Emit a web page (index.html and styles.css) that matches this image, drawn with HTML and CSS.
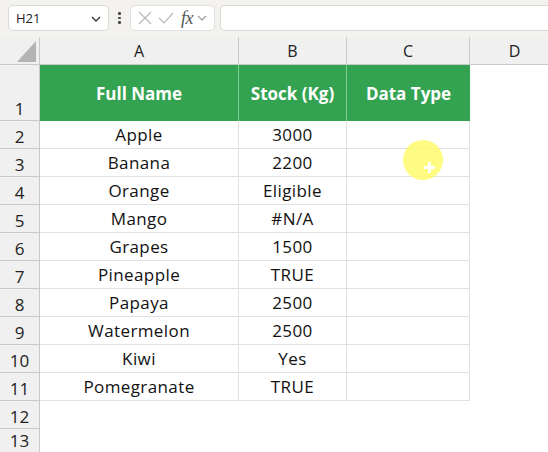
FILE: index.html
```html
<!DOCTYPE html>
<html>
<head>
<meta charset="utf-8">
<link rel="stylesheet" href="styles.css">
</head>
<body>
<div class="app">
  <div class="fbar">
    <div class="namebox">
      <span class="ref">H21</span>
      <svg class="chev" width="12" height="8" viewBox="0 0 12 8"><path d="M2 2 L6 6 L10 2" fill="none" stroke="#333" stroke-width="1.3"/></svg>
    </div>
    <div class="dots"><i></i><i></i><i></i></div>
    <div class="btns">
      <svg width="16" height="16" viewBox="0 0 16 16"><path d="M2 2 L14 14 M14 2 L2 14" stroke="#b8b8b8" stroke-width="1.2" fill="none"/></svg>
      <svg width="18" height="16" viewBox="0 0 18 16"><path d="M2 8 L7 13 L16 3" stroke="#b8b8b8" stroke-width="1.2" fill="none"/></svg>
      <span class="fx">fx</span>
      <svg width="10" height="8" viewBox="0 0 10 8"><path d="M1 2 L5 6 L9 2" fill="none" stroke="#999" stroke-width="1.1"/></svg>
    </div>
    <div class="finput"></div>
  </div>
  <div class="sheet">
    <div class="corner"><div class="tri"></div></div>
    <div class="ch">A</div><div class="ch">B</div><div class="ch">C</div><div class="ch">D</div>

    <div class="rh">1</div><div class="hd">Full Name</div><div class="hd">Stock (Kg)</div><div class="hd">Data Type</div><div class="e"></div>

    <div class="rh">2</div><div class="c">Apple</div><div class="c">3000</div><div class="c"></div><div class="e"></div>
    <div class="rh">3</div><div class="c">Banana</div><div class="c">2200</div><div class="c"></div><div class="e"></div>
    <div class="rh">4</div><div class="c">Orange</div><div class="c">Eligible</div><div class="c"></div><div class="e"></div>
    <div class="rh">5</div><div class="c">Mango</div><div class="c">#N/A</div><div class="c"></div><div class="e"></div>
    <div class="rh">6</div><div class="c">Grapes</div><div class="c">1500</div><div class="c"></div><div class="e"></div>
    <div class="rh">7</div><div class="c">Pineapple</div><div class="c">TRUE</div><div class="c"></div><div class="e"></div>
    <div class="rh">8</div><div class="c">Papaya</div><div class="c">2500</div><div class="c"></div><div class="e"></div>
    <div class="rh">9</div><div class="c">Watermelon</div><div class="c">2500</div><div class="c"></div><div class="e"></div>
    <div class="rh">10</div><div class="c">Kiwi</div><div class="c">Yes</div><div class="c"></div><div class="e"></div>
    <div class="rh">11</div><div class="c">Pomegranate</div><div class="c">TRUE</div><div class="c"></div><div class="e"></div>
    <div class="rh">12</div><div class="e"></div><div class="e"></div><div class="e"></div><div class="e"></div>
    <div class="rh last">13</div><div class="e"></div><div class="e"></div><div class="e"></div><div class="e"></div>
  </div>
  <div class="cursor"><span class="plus"></span></div>
</div>
</body>
</html>
```
FILE: styles.css
```css
* { box-sizing: border-box; }
html, body { margin: 0; padding: 0; background: #fff; }
body { width: 548px; height: 452px; overflow: hidden; font-family: "Open Sans", "Noto Sans", sans-serif; }
.app { position: relative; width: 548px; height: 452px; overflow: hidden; }

.fbar {
  height: 37px;
  background: #f4f2ef;
  display: flex;
  align-items: flex-start;
  padding: 5px 0 0 8px;
}
.namebox {
  width: 101px; height: 26px;
  background: #fff;
  border: 1px solid #dcdad6;
  border-radius: 5px;
  display: flex; align-items: center; justify-content: space-between;
  padding: 0 6px 0 7px;
}
.ref { font-family: "Open Sans", sans-serif; font-size: 13px; color: #222; }
.chev { margin-top: 1px; }
.dots { width: 21px; height: 26px; display: flex; flex-direction: column; align-items: center; justify-content: center; gap: 2px; }
.dots i { display: block; width: 2.5px; height: 2.5px; background: #444; border-radius: 50%; }
.btns {
  width: 85px; height: 26px;
  background: #fff;
  border: 1px solid #e2e0dc;
  border-radius: 5px;
  display: flex; align-items: center;
  padding: 0 4px 0 6px;
  gap: 4px;
}
.fx { font-family: "Liberation Serif", serif; font-style: italic; font-size: 18px; color: #555; margin-left: 2px; letter-spacing: -0.5px; line-height: 1; }
.finput {
  margin-left: 5px;
  flex: 1;
  height: 26px;
  background: #fff;
  border: 1px solid #dcdad6;
  border-right: none;
  border-radius: 5px 0 0 5px;
}

.sheet {
  display: grid;
  grid-template-columns: 40px 199px 108px 123px 90px;
  grid-template-rows: 28px 56px repeat(12, 28px);
}
.corner { background: #f0f0f0; border-right: 1px solid #c9c9c9; border-bottom: 1px solid #c9c9c9; position: relative; }
.tri {
  position: absolute; left: 17px; top: 4px;
  width: 0; height: 0;
  border-left: 19px solid transparent;
  border-bottom: 21px solid #b4b4b4;
}
.ch {
  background: #f0f0f0;
  border-right: 1px solid #c9c9c9;
  border-bottom: 1px solid #c9c9c9;
  display: flex; align-items: center; justify-content: center;
  font-family: "Open Sans", sans-serif; font-size: 16px; color: #222;
}
.rh {
  background: #f0f0f0;
  border-right: 1px solid #c9c9c9;
  border-bottom: 1px solid #c9c9c9;
  display: flex; align-items: flex-end; justify-content: center;
  padding-bottom: 0;
  font-family: "Open Sans", sans-serif; font-size: 17px; color: #222;
}
.rh.last { align-items: flex-start; padding-top: 0; }
.hd {
  background: #33a352;
  border-right: 1px solid #7fcf96;
  color: #fff;
  font-weight: 700;
  font-size: 17px;
  display: flex; align-items: center; justify-content: center;
  font-family: "Open Sans", sans-serif;
}
.hd:nth-child(9) { border-right: none; }
.c {
  border-right: 1px solid #e1e1e1;
  border-bottom: 1px solid #e1e1e1;
  display: flex; align-items: center; justify-content: center;
  font-size: 17px; letter-spacing: 0.4px; color: #111;
  font-family: "Open Sans", sans-serif;
}
.e { border-bottom: none; }

.cursor {
  position: absolute; left: 403px; top: 140px;
  width: 40px; height: 40px; border-radius: 50%;
  background: rgba(255, 250, 100, 0.8);
}
.plus { position: absolute; left: 21px; top: 22px; width: 11px; height: 11px; }
.plus::before, .plus::after { content: ""; position: absolute; background: #fff; }
.plus::before { left: 4px; top: 0; width: 3px; height: 11px; }
.plus::after { left: 0; top: 4px; width: 11px; height: 3px; }
```
